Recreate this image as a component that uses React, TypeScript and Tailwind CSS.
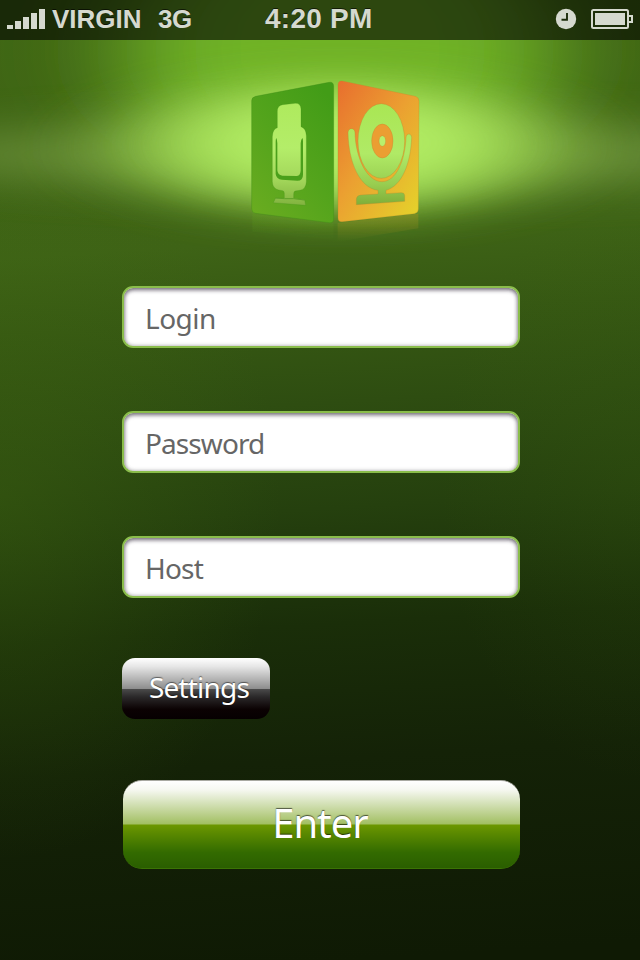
import React from 'react';

/* Dark green backdrop with the spotlight that falls behind the logo. */
function Backdrop() {
  return (
    <svg className="absolute inset-0" width="640" height="960" viewBox="0 0 640 960" aria-hidden="true">
      <defs>
        <linearGradient id="base" gradientUnits="userSpaceOnUse" x1="290" y1="0" x2="350" y2="960">
          <stop offset="0" stopColor="#406714" />
          <stop offset=".25" stopColor="#3e6316" />
          <stop offset=".33" stopColor="#365813" />
          <stop offset=".42" stopColor="#2e4d11" />
          <stop offset=".53" stopColor="#25400e" />
          <stop offset=".65" stopColor="#1a2e09" />
          <stop offset=".79" stopColor="#142207" />
          <stop offset="1" stopColor="#0f1a04" />
        </linearGradient>
        <radialGradient id="leftGlow" gradientUnits="userSpaceOnUse" cx="0" cy="0" r="1" gradientTransform="translate(0 500) scale(280 360)">
          <stop offset="0" stopColor="#41690f" stopOpacity=".36" />
          <stop offset=".5" stopColor="#41690f" stopOpacity=".18" />
          <stop offset="1" stopColor="#41690f" stopOpacity="0" />
        </radialGradient>
        <radialGradient id="rightGlow" gradientUnits="userSpaceOnUse" cx="0" cy="0" r="1" gradientTransform="translate(640 480) scale(200 300)">
          <stop offset="0" stopColor="#41690f" stopOpacity=".16" />
          <stop offset="1" stopColor="#41690f" stopOpacity="0" />
        </radialGradient>
        <filter id="softCore" filterUnits="userSpaceOnUse" x="-300" y="-150" width="1240" height="560">
          <feGaussianBlur stdDeviation="42 18" />
        </filter>
        <filter id="softBand" filterUnits="userSpaceOnUse" x="-300" y="-150" width="1240" height="560">
          <feGaussianBlur stdDeviation="40 21" />
        </filter>
        <filter id="softWide" filterUnits="userSpaceOnUse" x="-300" y="-150" width="1240" height="560">
          <feGaussianBlur stdDeviation="50 21" />
        </filter>
        <filter id="softTop" filterUnits="userSpaceOnUse" x="-300" y="-250" width="1240" height="660">
          <feGaussianBlur stdDeviation="56 26" />
        </filter>
      </defs>
      <rect width="640" height="960" fill="url(#base)" />
      <rect width="640" height="960" fill="url(#leftGlow)" />
      <rect width="640" height="960" fill="url(#rightGlow)" />
      <ellipse cx="340" cy="50" rx="215" ry="135" fill="#6fb227" filter="url(#softTop)" />
      <ellipse cx="370" cy="155" rx="470" ry="33" fill="#7da148" opacity=".62" filter="url(#softBand)" />
      <ellipse cx="340" cy="147" rx="222" ry="64" fill="#98d04e" opacity=".88" filter="url(#softWide)" />
      <ellipse cx="340" cy="143" rx="150" ry="48" fill="#b5f066" opacity=".9" filter="url(#softCore)" />
    </svg>
  );
}

function StatusBar() {
  return (
    <header className="relative flex h-10 items-center bg-black/60 pb-[2px] font-['Liberation_Sans',Arial,sans-serif] font-bold text-[#d5d9cf] [text-shadow:0_-1px_0_rgba(0,0,0,0.6)]">
      <div className="ml-[7px] flex h-5 items-end gap-[2px]">
        <i className="h-1 w-1.5 bg-current" />
        <i className="h-2 w-1.5 bg-current" />
        <i className="h-3 w-1.5 bg-current" />
        <i className="h-4 w-1.5 bg-current" />
        <i className="h-5 w-1.5 bg-current" />
      </div>
      <span className="ml-[7px] w-[90px] whitespace-nowrap text-[26px] leading-[38px]">VIRGIN</span>
      <span className="ml-[16px] w-[35px] text-[26px] leading-[38px] tracking-[-0.5px]">3G</span>
      <span className="ml-[72px] whitespace-nowrap text-[28px] leading-[38px] tracking-[0.25px]">4:20 PM</span>
      <svg className="ml-auto" width="78" height="22" viewBox="555 8 78 22" fill="currentColor">
        <circle cx="566" cy="19" r="10.2" />
        <path d="M567 13v6.7h-5.5" fill="none" stroke="#1d2c0b" strokeWidth="1.9" />
        <rect x="592" y="10" width="36" height="18" rx="1.5" fill="none" stroke="currentColor" strokeWidth="2" />
        <rect x="595" y="13" width="30" height="12" />
        <path d="M629 16h3v6h-3" fill="none" stroke="currentColor" strokeWidth="2" />
      </svg>
      <span className="w-[7px]" />
    </header>
  );
}

function Logo() {
  return (
    <svg className="ml-[235px] mt-[25px] block" width="200" height="180" viewBox="0 0 600 540" role="img" aria-label="Logo">
      <defs>
        <linearGradient id="greenFace" x1=".8" y1="0" x2=".1" y2="1">
          <stop offset="0" stopColor="#429c17" />
          <stop offset=".5" stopColor="#54a41c" />
          <stop offset="1" stopColor="#6aac20" />
        </linearGradient>
        <linearGradient id="orangeFace" x1="0" y1="0" x2=".85" y2="1">
          <stop offset="0" stopColor="#e86e2e" />
          <stop offset=".5" stopColor="#eba031" />
          <stop offset="1" stopColor="#e5cf2b" />
        </linearGradient>
        <linearGradient id="cut" gradientUnits="userSpaceOnUse" x1="0" y1="110" x2="0" y2="420">
          <stop offset="0" stopColor="#aeea5d" />
          <stop offset=".45" stopColor="#b4ed69" />
          <stop offset=".75" stopColor="#a3d75b" />
          <stop offset="1" stopColor="#82b33f" />
        </linearGradient>
        <linearGradient id="cutRight" gradientUnits="userSpaceOnUse" x1="0" y1="110" x2="0" y2="420">
          <stop offset="0" stopColor="#a9e653" />
          <stop offset=".5" stopColor="#b0ea66" />
          <stop offset=".8" stopColor="#98cd50" />
          <stop offset="1" stopColor="#7fae38" />
        </linearGradient>
        <linearGradient id="mirrorGreen" x1="0" y1="0" x2="0" y2="1">
          <stop offset="0" stopColor="#5fa31c" stopOpacity=".25" />
          <stop offset="1" stopColor="#5fa31c" stopOpacity="0" />
        </linearGradient>
        <linearGradient id="mirrorOrange" x1="0" y1="0" x2="0" y2="1">
          <stop offset="0" stopColor="#a8911e" stopOpacity=".4" />
          <stop offset="1" stopColor="#a8911e" stopOpacity="0" />
        </linearGradient>
      </defs>

      <path d="M52 445L295 474V525L52 500Z" fill="url(#mirrorGreen)" />
      <path d="M308 474L550 446V490L308 530Z" fill="url(#mirrorOrange)" />

      <path d="M62 94L282 52Q295 49 296 63V462Q296 475 283 473L62 445Q50 443 50 431V107Q50 97 62 94Z" fill="url(#greenFace)" stroke="#3d8b16" strokeOpacity=".55" strokeWidth="2" />
      <path d="M322 48L541 94Q552 97 552 109L550 432Q550 444 538 446L322 470Q309 472 309 458V60Q309 46 322 48Z" fill="url(#orangeFace)" stroke="#b98a25" strokeOpacity=".45" strokeWidth="2" />

      <path d="M127 139Q127 121 143 119L181 115Q197 114 198 132V185Q213 190 214 212V350Q213 372 195 376L180 378Q176 380 176 387V400L209 405L212 421L115 413L122 399L148 400V385Q148 378 143 377L131 375Q113 371 112 350V215Q113 192 127 188Z" fill="url(#cut)" stroke="#388c18" strokeOpacity=".45" strokeWidth="1.5" />
      <path d="M124 219Q127 226 127 235V316Q128 331 142 332L184 333Q196 333 197 317V235Q197 225 202 219Q204 222 204 229V329Q204 347 187 347L141 344Q124 343 122 327V230Q122 222 124 219Z" fill="#4aa01b" />
      <path d="M121 399L148 401H176L209 405" fill="none" stroke="#5da126" strokeWidth="3" />

      <ellipse cx="439" cy="228" rx="70" ry="112" fill="url(#cutRight)" stroke="#b48a2c" strokeOpacity=".5" strokeWidth="2" />
      <ellipse cx="442" cy="228" rx="32" ry="51" fill="#eb9e32" stroke="#c38429" strokeWidth="1" />
      <ellipse cx="442" cy="228" rx="10" ry="16" fill="#b8f06c" stroke="#c38429" strokeWidth="1" />
      <path d="M339 203C339 187 360 187 360 203C361 272 393 350 441 350C485 349 510 285 513 218C514 203 530 204 530 218C527 294 502 362 453 376V386L498 383Q509 382 509 392V409L364 419V402Q365 391 378 390L429 387V376C374 369 341 293 339 203Z" fill="url(#cutRight)" stroke="#b48a2c" strokeOpacity=".5" strokeWidth="2" />
    </svg>
  );
}

function Field({ label, tracking }: { label: string; tracking: string }) {
  return (
    <label className="flex h-[62px] w-[398px] items-center rounded-[11px] border-2 border-[#8abd4b] bg-white pl-[21px] shadow-[inset_0_2px_4px_rgba(50,40,60,0.65),inset_0_0_4px_rgba(60,60,60,0.3)]">
      <span className={`pt-[2px] text-[28px] leading-[58px] text-[#666] ${tracking}`}>{label}</span>
    </label>
  );
}

export default function App() {
  return (
    <main className="relative h-[960px] w-[640px] overflow-hidden bg-[#142207] font-['Noto_Sans','Open_Sans',sans-serif]">
      <Backdrop />
      <div className="relative">
        <StatusBar />
        <Logo />
        <form className="ml-[122px] mt-[41px] flex flex-col items-start">
          <div className="flex flex-col gap-[63px]">
            <Field label="Login" tracking="tracking-[-0.5px]" />
            <Field label="Password" tracking="tracking-[-0.9px]" />
            <Field label="Host" tracking="tracking-[-0.8px]" />
          </div>
          <button
            type="button"
            className="mt-[60px] flex h-[61px] w-[148px] items-center justify-center rounded-[13px] bg-[linear-gradient(180deg,#fff_0%,#e6e6e6_14%,#8e8e8e_50%,#4a4a4a_51%,#2a2829_64%,#0b0203_84%,#060001_100%)] pb-[4px] pl-[6px]"
          >
            <span className="whitespace-nowrap text-[28px] leading-[56px] tracking-[-0.8px] text-white [text-shadow:0_-1px_1px_rgba(0,0,0,0.5)]">Settings</span>
          </button>
          <button
            type="button"
            className="ml-px mt-[61px] flex h-[89px] w-[397px] items-center justify-center rounded-[19px] border-y border-t-[#a9a9a2] border-b-[#3b7304] bg-[linear-gradient(180deg,#fff_0%,#f6f8f1_10%,#a2bf62_49.5%,#6c9700_50.5%,#336b00_82%,#2a5e00_100%)] pb-[4px] pr-[3px]"
          >
            <span className="whitespace-nowrap text-[40px] leading-[82px] tracking-[-1px] text-white [text-shadow:0_-1px_1px_rgba(0,0,0,0.6)]">Enter</span>
          </button>
        </form>
      </div>
    </main>
  );
}
